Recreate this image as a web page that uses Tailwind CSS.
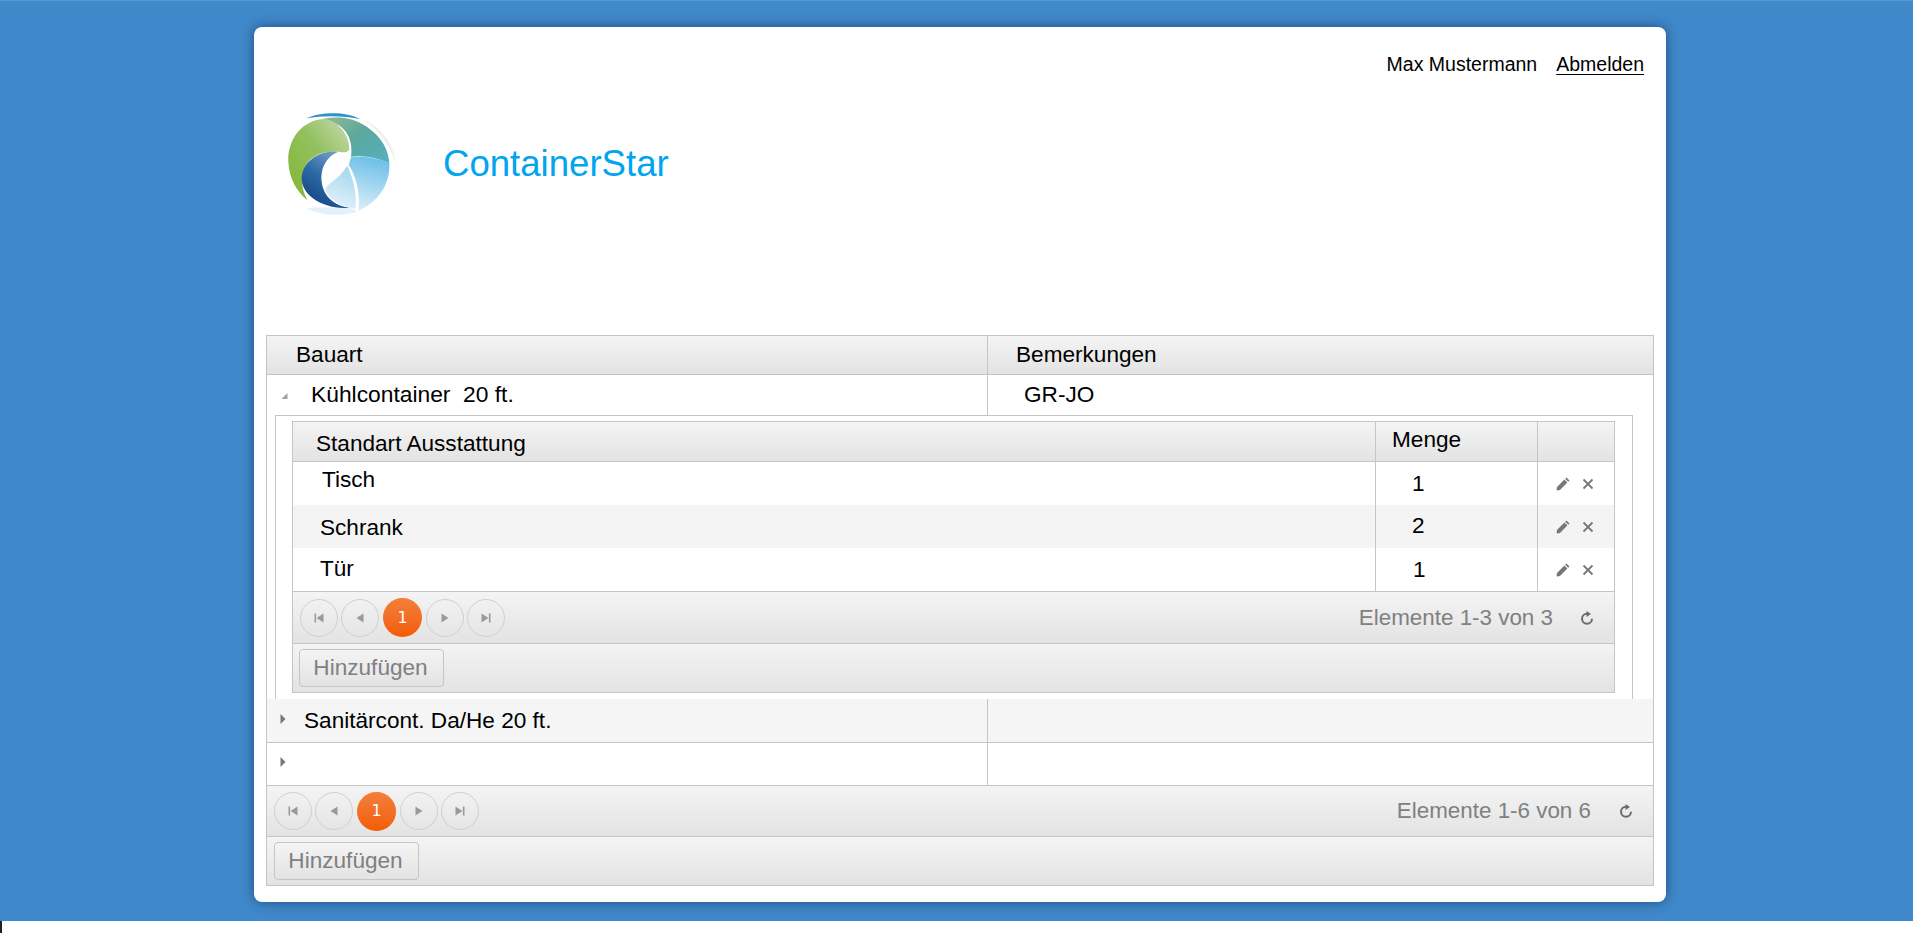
<!DOCTYPE html>
<html lang="de">
<head>
  <meta charset="UTF-8" />
  <title>ContainerStar</title>
  <script src="https://cdn.jsdelivr.net/npm/@tailwindcss/browser@4"></script>
</head>
<body class="bg-white [font-family:'Liberation_Sans',Arial,sans-serif] text-[22.6px] text-black overflow-hidden">
  <svg width="0" height="0" class="absolute">
    <defs>
      <symbol id="first" viewBox="0 0 12 12"><path d="M1.500 1.500h1.600v9H1.500zM10.500 1.500v9L3.500 6z" fill="#9a9a9a"/></symbol>
      <symbol id="prev" viewBox="0 0 12 12"><path d="M9.500 1.500v9L2.500 6z" fill="#9a9a9a"/></symbol>
      <symbol id="next" viewBox="0 0 12 12"><path d="M2.500 1.500v9L9.500 6z" fill="#9a9a9a"/></symbol>
      <symbol id="last" viewBox="0 0 12 12"><path d="M8.900 1.500h1.600v9H8.900zM1.500 1.500v9L8.500 6z" fill="#9a9a9a"/></symbol>
      <symbol id="refresh" viewBox="0 0 14 14"><path d="M7 2.800a5 5 0 1 0 5 5" fill="none" stroke="#6e6a6a" stroke-width="2"/><path d="M6.500 0l4.500 3-4.500 3z" fill="#6e6a6a"/></symbol>
      <symbol id="pencil" viewBox="0 0 16 16"><path d="M11.500 1.500l3 3-1.300 1.300-3-3zM9.400 3.600l3 3-7.400 7.400-3 .4-.4-.4.400-3z" fill="#7b7676"/></symbol>
      <symbol id="close" viewBox="0 0 12 12"><path d="M1.500 1.500l9 9M10.500 1.500l-9 9" stroke="#7b7676" stroke-width="1.800" fill="none"/></symbol>
    </defs>
  </svg>

  <div class="h-[921px] bg-[#3f88c9] pt-[26px] border-t border-[#5a9ad3]">
    <div class="w-[1412px] h-[875px] ml-[254px] bg-white rounded-[8px] shadow-[0_0_12px_rgba(0,30,70,0.55)] px-[12px]">

      <div class="h-[73px] pt-[23px] pr-[10px] flex justify-end gap-[19px] text-[19.5px] leading-[28px]">
        <span>Max Mustermann</span>
        <a href="#" class="underline underline-offset-[3px]">Abmelden</a>
      </div>

      <div class="h-[130px] mb-[105px] flex items-center">
        <svg class="ml-[4px] blur-[0.4px]" width="140" height="130" viewBox="0 0 420 390">
          <defs>
            <linearGradient id="lgGreen" x1="0" y1="1" x2="1" y2="0"><stop offset="0.1" stop-color="#84b838"/><stop offset="0.55" stop-color="#93c05e"/><stop offset="1" stop-color="#c9dcb4"/></linearGradient>
            <linearGradient id="lgTeal" x1="0" y1="0" x2="1" y2="1"><stop offset="0" stop-color="#8fbb94"/><stop offset="0.45" stop-color="#5aa89c"/><stop offset="1" stop-color="#56b0c0"/></linearGradient>
            <linearGradient id="lgSky" x1="0.5" y1="0" x2="0.3" y2="1"><stop offset="0" stop-color="#6cbfe8"/><stop offset="1" stop-color="#dceff9"/></linearGradient>
            <linearGradient id="lgNavy" x1="0.8" y1="0" x2="0.2" y2="1"><stop offset="0" stop-color="#7ba6cf"/><stop offset="0.5" stop-color="#2e6aa6"/><stop offset="1" stop-color="#123f80"/></linearGradient>
            <linearGradient id="lgPale" x1="0.6" y1="0" x2="0.3" y2="1"><stop offset="0" stop-color="#a5d6ef"/><stop offset="1" stop-color="#e6f3fb"/></linearGradient>
          </defs>
          <path d="M110 325C160 350 215 348 262 335L235 320C190 325 150 320 110 325z" fill="#e4f1fa"/>
          <path d="M280 60C330 80 375 130 378 200C370 150 335 95 280 60z" fill="#e8f2e0"/>
          <path d="M160 56C205 48 250 52 290 80C335 110 356 150 358 190C320 172 280 165 243 170L225 120z" fill="url(#lgTeal)"/>
          <path d="M165 56C90 60 52 125 55 185C57 235 80 275 113 301C95 270 90 235 105 200C125 160 170 153 208 155C228 160 240 158 241 128C238 95 205 65 165 56z" fill="url(#lgGreen)"/>
          <path d="M200 72C232 90 250 125 243 172L236 160C242 130 232 100 200 72z" fill="#ffffff"/>
          <path d="M108 55C150 36 225 32 272 58C225 47 160 46 108 55z" fill="#2f93c9"/>
          <path d="M243 172C282 166 322 173 358 190C362 255 320 310 265 333C272 285 258 225 236 195z" fill="url(#lgSky)"/>
          <path d="M232 197C250 235 262 285 256 328L238 322C205 315 175 295 165 268C178 245 205 240 232 197z" fill="url(#lgPale)"/>
          <path d="M206 155C150 150 100 180 95 232C92 285 160 330 238 323C195 318 160 290 155 245C150 200 175 165 206 155z" fill="url(#lgNavy)"/>
        </svg>
        <span class="ml-[33px] mb-[2px] text-[36.6px] leading-[44px] text-[#00a4ef]">ContainerStar</span>
      </div>

      <!-- Haupttabelle -->
      <div class="h-[551px] border border-[#c5c5c5] flex flex-col">
        <div class="h-[39px] shrink-0 flex border-b border-[#c5c5c5] bg-gradient-to-b from-[#f4f4f4] to-[#e3e3e3] leading-[32px]">
          <div class="w-[721px] pl-[29px] pt-[3px] border-r border-[#c5c5c5]">Bauart</div>
          <div class="pl-[28px] pt-[3px]">Bemerkungen</div>
        </div>
        <div class="h-[40px] shrink-0 flex leading-[38px]">
          <div class="w-[721px] pl-[13px] border-r border-[#c5c5c5] flex whitespace-pre">
            <svg class="mt-[17px] mr-[11px]" width="8" height="8" viewBox="0 0 8 8"><path d="M7.500 1v6H1.500z" fill="#a0a0a0"/></svg>
            <span class="ml-[12px] text-[22.8px]">Kühlcontainer  20 ft.</span>
          </div>
          <div class="pl-[36px] pt-[1px]">GR-JO</div>
        </div>

        <!-- Detailbereich -->
        <div class="h-[284px] shrink-0 ml-[8px] mr-[20px] border border-b-0 border-[#c5c5c5] pt-[5px] pl-[16px] pr-[17px]">
          <div class="h-[272px] border border-[#c5c5c5] flex flex-col">
            <div class="h-[40px] shrink-0 flex border-b border-[#c5c5c5] bg-gradient-to-b from-[#f4f4f4] to-[#e3e3e3] leading-[36px]">
              <div class="w-[1083px] pl-[23px] pt-[4px] border-r border-[#c5c5c5]">Standart Ausstattung</div>
              <div class="w-[162px] pl-[16px] border-r border-[#c5c5c5]">Menge</div>
              <div class="flex-1"></div>
            </div>
            <div class="h-[43px] shrink-0 flex bg-white leading-[36px]">
              <div class="w-[1083px] pl-[29px] border-r border-[#c5c5c5]">Tisch</div>
              <div class="w-[162px] pl-[36px] pt-[4px] border-r border-[#c5c5c5]">1</div>
              <div class="flex-1 flex items-center pl-[17px] gap-[11px] pt-[1px]"><svg class="w-[16px] h-[16px]"><use href="#pencil"/></svg><svg class="w-[12px] h-[12px]"><use href="#close"/></svg></div>
            </div>
            <div class="h-[43px] shrink-0 flex bg-[#f4f4f4] leading-[46px]">
              <div class="w-[1083px] pl-[27px] border-r border-[#c5c5c5]">Schrank</div>
              <div class="w-[162px] pl-[36px] border-r border-[#c5c5c5] leading-[42px]">2</div>
              <div class="flex-1 flex items-center pl-[17px] gap-[11px] pt-[1px]"><svg class="w-[16px] h-[16px]"><use href="#pencil"/></svg><svg class="w-[12px] h-[12px]"><use href="#close"/></svg></div>
            </div>
            <div class="h-[44px] shrink-0 flex bg-white border-b border-[#c5c5c5] leading-[42px]">
              <div class="w-[1083px] pl-[27px] border-r border-[#c5c5c5]">Tür</div>
              <div class="w-[162px] pl-[37px] border-r border-[#c5c5c5] leading-[44px]">1</div>
              <div class="flex-1 flex items-center pl-[17px] gap-[11px] pt-[1px]"><svg class="w-[16px] h-[16px]"><use href="#pencil"/></svg><svg class="w-[12px] h-[12px]"><use href="#close"/></svg></div>
            </div>
            <div class="h-[52px] shrink-0 flex items-center border-b border-[#c5c5c5] bg-gradient-to-b from-[#f4f4f4] to-[#e3e3e3] pl-[7px] pr-[20px]">
              <div class="flex items-center gap-[3px]">
                <span class="w-[38px] h-[38px] rounded-full border border-[#d0d0d0] flex items-center justify-center"><svg class="w-[12px] h-[12px]"><use href="#first"/></svg></span>
                <span class="w-[38px] h-[38px] rounded-full border border-[#d0d0d0] flex items-center justify-center"><svg class="w-[12px] h-[12px]"><use href="#prev"/></svg></span>
                <span class="w-[39px] h-[39px] mx-px rounded-full bg-gradient-to-b from-[#f27f38] to-[#f45c00] text-white text-[16px] flex items-center justify-center [font-family:'DejaVu_Sans',sans-serif]">1</span>
                <span class="w-[38px] h-[38px] rounded-full border border-[#d0d0d0] flex items-center justify-center"><svg class="w-[12px] h-[12px]"><use href="#next"/></svg></span>
                <span class="w-[38px] h-[38px] rounded-full border border-[#d0d0d0] flex items-center justify-center"><svg class="w-[12px] h-[12px]"><use href="#last"/></svg></span>
              </div>
              <span class="ml-auto text-[#808080] text-[22.4px]">Elemente 1-3 von 3</span>
              <svg class="ml-[27px] w-[14px] h-[14px]"><use href="#refresh"/></svg>
            </div>
            <div class="flex-1 flex items-center bg-gradient-to-b from-[#f4f4f4] to-[#e3e3e3] pl-[6px]">
              <button class="w-[145px] h-[38px] pr-[2px] rounded-[4px] border border-[#c5c5c5] bg-gradient-to-b from-[#f4f4f4] to-[#e3e3e3] text-[#808080]">Hinzufügen</button>
            </div>
          </div>
        </div>

        <div class="h-[44px] shrink-0 flex border-b border-[#c5c5c5] bg-[#f5f5f5] leading-[44px]">
          <div class="w-[721px] pl-[13px] border-r border-[#c5c5c5] flex">
            <svg class="mt-[15px] mr-[13px]" width="6" height="10" viewBox="0 0 6 10"><path d="M0.500 0v10L5.500 5z" fill="#7b7676"/></svg>
            <span class="ml-[5px]">Sanitärcont. Da/He 20 ft.</span>
          </div>
          <div></div>
        </div>
        <div class="h-[43px] shrink-0 flex border-b border-[#c5c5c5] bg-white">
          <div class="w-[721px] pl-[13px] border-r border-[#c5c5c5]">
            <svg class="mt-[14px]" width="6" height="10" viewBox="0 0 6 10"><path d="M0.500 0v10L5.500 5z" fill="#7b7676"/></svg>
          </div>
        </div>
        <div class="h-[51px] shrink-0 flex items-center border-b border-[#c5c5c5] bg-gradient-to-b from-[#f4f4f4] to-[#e3e3e3] pl-[7px] pr-[20px]">
          <div class="flex items-center gap-[3px]">
            <span class="w-[38px] h-[38px] rounded-full border border-[#d0d0d0] flex items-center justify-center"><svg class="w-[12px] h-[12px]"><use href="#first"/></svg></span>
            <span class="w-[38px] h-[38px] rounded-full border border-[#d0d0d0] flex items-center justify-center"><svg class="w-[12px] h-[12px]"><use href="#prev"/></svg></span>
            <span class="w-[39px] h-[39px] mx-px rounded-full bg-gradient-to-b from-[#f27f38] to-[#f45c00] text-white text-[16px] flex items-center justify-center [font-family:'DejaVu_Sans',sans-serif]">1</span>
            <span class="w-[38px] h-[38px] rounded-full border border-[#d0d0d0] flex items-center justify-center"><svg class="w-[12px] h-[12px]"><use href="#next"/></svg></span>
            <span class="w-[38px] h-[38px] rounded-full border border-[#d0d0d0] flex items-center justify-center"><svg class="w-[12px] h-[12px]"><use href="#last"/></svg></span>
          </div>
          <span class="ml-auto text-[#808080] text-[22.4px]">Elemente 1-6 von 6</span>
          <svg class="ml-[28px] w-[14px] h-[14px]"><use href="#refresh"/></svg>
        </div>
        <div class="flex-1 flex items-center bg-gradient-to-b from-[#f4f4f4] to-[#e3e3e3] pl-[7px]">
          <button class="w-[145px] h-[38px] pr-[2px] rounded-[4px] border border-[#c5c5c5] bg-gradient-to-b from-[#f4f4f4] to-[#e3e3e3] text-[#808080]">Hinzufügen</button>
        </div>
      </div>
    </div>
  </div>
  <div class="w-[2px] h-[12px] bg-[#1a2230]"></div>
</body>
</html>
